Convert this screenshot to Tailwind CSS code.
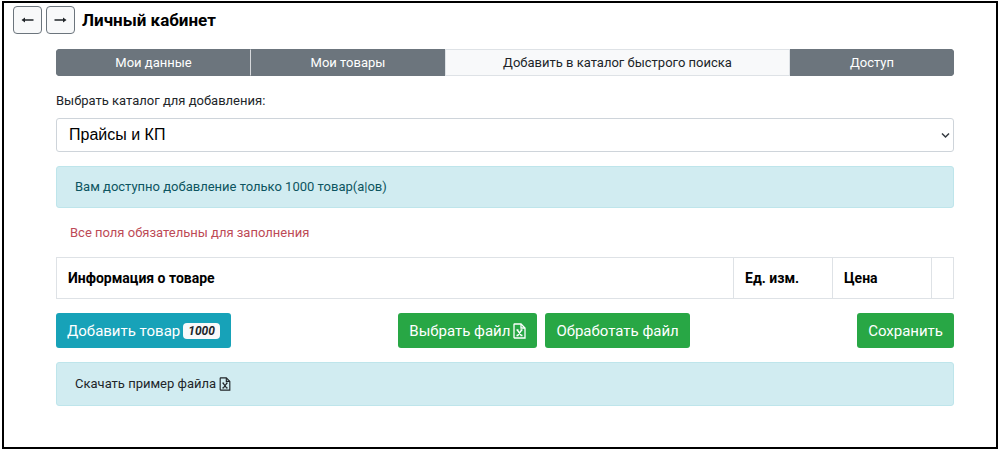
<!DOCTYPE html>
<html lang="ru">
<head>
<meta charset="utf-8">
<meta name="viewport" content="width=device-width, initial-scale=1">
<title>Личный кабинет</title>
<script src="https://cdn.jsdelivr.net/npm/@tailwindcss/browser@4"></script>
</head>
<body class="flex min-h-screen flex-col bg-white px-[2px] py-px font-[Roboto,sans-serif] text-[13px] leading-5 text-[#212529]">
<div class="grow border-2 border-black pb-8">
  <header class="flex items-center gap-1 pt-[3px] pl-[9px]">
    <button type="button" aria-label="Назад" class="flex h-7 w-[29px] items-center justify-center rounded border border-[#6c757d] bg-[#f8f9fa]">
      <svg width="13" height="8" viewBox="0 0 13 8" fill="none" stroke="#212529" stroke-width="1.5"><path d="M2 4h10.500"/><path d="M4 1.500 0.500 4 4 6.500z" fill="#212529" stroke="none"/></svg>
    </button>
    <button type="button" aria-label="Вперёд" class="flex h-7 w-[29px] items-center justify-center rounded border border-[#6c757d] bg-[#f8f9fa]">
      <svg width="13" height="8" viewBox="0 0 13 8" fill="none" stroke="#212529" stroke-width="1.5"><path d="M0.500 4h10.500"/><path d="M9 1.500l3.500 2.500L9 6.500z" fill="#212529" stroke="none"/></svg>
    </button>
    <h1 class="pl-[3px] text-[17px] font-bold text-black">Личный кабинет</h1>
  </header>

  <main class="mr-[42px] ml-[52px] pt-[15px]">
    <nav class="flex h-[27px] overflow-hidden rounded-sm text-center leading-[25px] text-white">
      <a href="#data" class="grow-[193] basis-0 border border-[#6c757d] border-r-[#d6d8db] bg-[#6c757d]">Мои данные</a>
      <a href="#goods" class="grow-[192] basis-0 border border-[#6c757d] bg-[#6c757d]">Мои товары</a>
      <a href="#add" aria-current="page" class="grow-[343] basis-0 border border-[#dee2e6] bg-[#f8f9fa] text-[#212529]">Добавить в каталог быстрого поиска</a>
      <a href="#access" class="grow-[162] basis-0 border border-[#6c757d] bg-[#6c757d]">Доступ</a>
    </nav>

    <label for="catalog" class="mt-[15px] block">Выбрать каталог для добавления:</label>
    <div class="relative mt-[7px]">
      <select id="catalog" class="block h-[34px] w-full appearance-none rounded-[3px] border border-[#ced4da] bg-white pr-8 pl-3 font-['Liberation_Sans',sans-serif] text-base text-black">
        <option>Прайсы и КП</option>
      </select>
      <svg class="pointer-events-none absolute top-[14px] right-1" width="9" height="7" viewBox="0 0 9 7" fill="none" stroke="#343a40" stroke-width="1.500"><path d="M1 1.500l3.500 3.500L8 1.500"/></svg>
    </div>

    <p class="mt-[14px] rounded-[3px] border border-[#bee5eb] bg-[#d1ecf1] px-[18px] py-[10px] text-[#0c5460]">Вам доступно добавление только 1000 товар(а|ов)</p>
    <p class="mt-[15px] px-[14px] text-[#bd4a56]">Все поля обязательны для заполнения</p>

    <table class="mt-[14px] h-[42px] w-full table-fixed border-collapse text-left text-sm text-black">
      <thead>
        <tr>
          <th scope="col" class="border border-[#dee2e6] px-[11px]">Информация о товаре</th>
          <th scope="col" class="w-[99px] border border-[#dee2e6] px-[11px]">Ед. изм.</th>
          <th scope="col" class="w-[99px] border border-[#dee2e6] px-[11px]">Цена</th>
          <td class="w-[22px] border border-[#dee2e6]"></td>
        </tr>
      </thead>
    </table>

    <div class="mt-[14px] flex items-center justify-between text-[15px] text-white">
      <button type="button" class="flex h-[35px] items-center gap-[3px] rounded-[3px] bg-[#17a2b8] px-[11px]">Добавить товар
        <span class="rounded bg-[#f8f9fa] px-[5px] text-xs leading-4 font-bold text-[#212529] italic">1000</span>
      </button>
      <div class="flex gap-2">
        <button type="button" class="flex h-[35px] items-center gap-[3px] rounded-[3px] bg-[#28a745] px-[11px]">Выбрать файл
          <svg width="13" height="16" viewBox="0 0 13 16" fill="none" stroke="currentColor" stroke-width="1.300"><path d="M1.500 1h6.500l4 4v10H1.500A.700.700 0 0 1 1 14.500v-13A.700.700 0 0 1 1.500 1z"/><path d="M8 1v4h4"/><path d="M4.300 7l4 5.500M8.700 7l-4 5.500M3.500 7h2M7.500 7h2M3.500 12.500h2M7.500 12.500h2"/></svg>
        </button>
        <button type="button" class="h-[35px] rounded-[3px] bg-[#28a745] px-[11px]">Обработать файл</button>
      </div>
      <button type="button" class="h-[35px] rounded-[3px] bg-[#28a745] px-[11px]">Сохранить</button>
    </div>

    <div class="mt-[14px] rounded-[3px] border border-[#bee5eb] bg-[#d1ecf1] px-[18px] py-[11px]">
      <a href="#example" class="inline-flex items-center gap-[3px] align-top">Скачать пример файла
        <svg width="12" height="14" viewBox="0 0 13 16" fill="none" stroke="currentColor" stroke-width="1.300"><path d="M1.500 1h6.500l4 4v10H1.500A.700.700 0 0 1 1 14.500v-13A.700.700 0 0 1 1.500 1z"/><path d="M8 1v4h4"/><path d="M4.300 7l4 5.500M8.700 7l-4 5.500M3.500 7h2M7.500 7h2M3.500 12.500h2M7.500 12.500h2"/></svg>
      </a>
    </div>
  </main>
</div>
</body>
</html>
